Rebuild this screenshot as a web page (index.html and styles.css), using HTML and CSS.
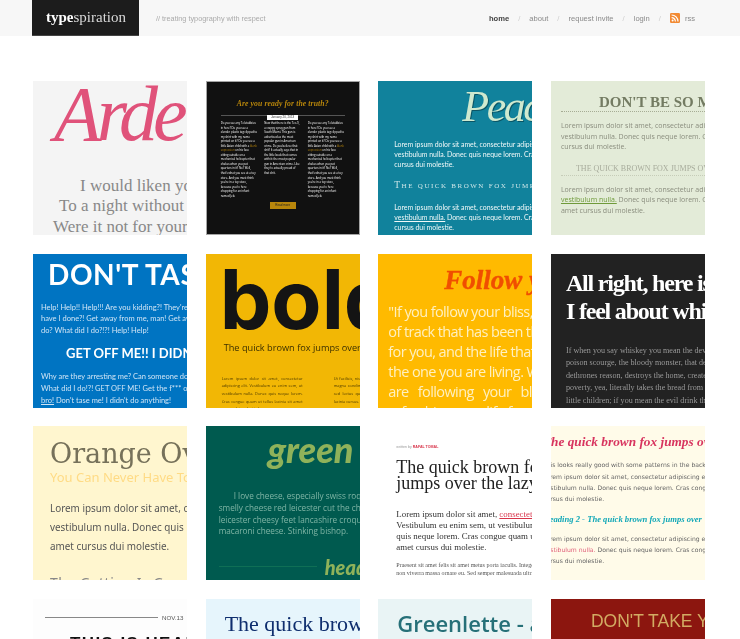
FILE: index.html
```html
<!DOCTYPE html>
<html lang="en">
<head>
  <meta charset="UTF-8" />
  <meta name="viewport" content="width=device-width, initial-scale=1.0"/>
  <title>typespiration</title>
  <link rel="stylesheet" href="styles.css">
</head>
<body>
  <header class="topbar">
    <a class="logo" href="#"><b>type</b>spiration</a>
    <p class="tagline">// treating typography with respect</p>
    <nav class="nav">
      <a class="active" href="#">home</a><i>/</i>
      <a href="#">about</a><i>/</i>
      <a href="#">request invite</a><i>/</i>
      <a href="#">login</a><i>/</i>
      <svg class="rss" viewBox="0 0 10 10" width="10" height="10">
        <rect width="10" height="10" rx="1.2" fill="#f28a33"/>
        <circle cx="2.6" cy="7.5" r="1" fill="#fff"/>
        <path d="M1.6 4.6a3.8 3.8 0 0 1 3.8 3.8M1.6 2a6.4 6.4 0 0 1 6.4 6.4" fill="none" stroke="#fff" stroke-width="1.2"/>
      </svg>
      <a class="rss-label" href="#">rss</a>
    </nav>
  </header>

  <main class="grid">
    <article class="card c1">
      <h2>Ardel</h2>
      <p><span class="l1">I would liken you</span><span class="l2">To a night without</span><span class="l3">Were it not for your</span></p>
    </article>

    <article class="card c2">
      <h2>Are you ready for the truth?</h2>
      <div class="date"><span>January 20, 2013</span></div>
      <div class="cols">
        <p>Do you see any Teletubbies in here? Do you see a slender plastic tag clipped to my shirt with my name printed on it? Do you see a little Asian child with a <em>blank expression</em> on his face sitting outside on a mechanical helicopter that shakes when you put quarters in it? No? Well, that's what you see at a toy store. And you must think you're in a toy store, because you're here shopping for an infant named Jeb.</p>
        <p>Now that there is the Tec-9, a crappy spray gun from South Miami. This gun is advertised as the most popular gun in American crime. Do you believe that shit? It actually says that in the little book that comes with it: the most popular gun in American crime. Like they're actually proud of that shit.</p>
        <p>Do you see any Teletubbies in here? Do you see a slender plastic tag clipped to my shirt with my name printed on it? Do you see a little Asian child with a <em>blank expression</em> on his face sitting outside on a mechanical helicopter that shakes when you put quarters in it? No? Well, that's what you see at a toy store. And you must think you're in a toy store, because you're here shopping for an infant named Jeb.</p>
      </div>
      <span class="more">Read more</span>
    </article>

    <article class="card c3">
      <h2>Peace</h2>
      <p>Lorem ipsum dolor sit amet, consectetur adipiscing<br>vestibulum nulla. Donec quis neque lorem. Cras congue<br>cursus dui molestie.</p>
      <h3>The quick brown fox jumps over</h3>
      <p>Lorem ipsum dolor sit amet, consectetur adipiscing<br><u>vestibulum nulla.</u> Donec quis neque lorem. Cras congue<br>cursus dui molestie.</p>
    </article>

    <article class="card c4">
      <h2>DON'T BE SO MEAN</h2>
      <p>Lorem ipsum dolor sit amet, consectetur adipiscing elit.<br>vestibulum nulla. Donec quis neque lorem. Cras congue<br>cursus dui molestie.</p>
      <h3>THE QUICK BROWN FOX JUMPS OVER</h3>
      <p><span>Lorem ipsum dolor sit amet, consectetur adipiscing elit.</span><br><u>vestibulum nulla.</u> Donec quis neque lorem. Cras congue<br>amet cursus dui molestie.</p>
    </article>

    <article class="card c5">
      <h2>DON'T TASE ME</h2>
      <p>Help! Help!! Help!!! Are you kidding?! They're tasing me!<br>have I done?! Get away from me, man! Get away! What did I<br>do? What did I do?!?! Help! Help!</p>
      <h3>GET OFF ME!! I DIDN'T DO IT</h3>
      <p>Why are they arresting me? Can someone do something?<br>What did I do!?! GET OFF ME! Get the f*** of me!<br><u>bro!</u> Don't tase me! I didn't do anything!</p>
    </article>

    <article class="card c6">
      <h2>bold</h2>
      <h3>The quick brown fox jumps over the lazy dog</h3>
      <div class="cols">
        <p>Lorem ipsum dolor sit amet, consectetur adipiscing elit. Vestibulum eu enim sem, ut vestibulum nulla. Donec quis neque lorem. Cras congue quam ut tellus lacinia sit amet cursus dui molestie lorem.</p>
        <p>Ut facilisis, nisl sit amet libero justo tempor magna condimentum lorem ipsum. Aenean sed lectus quam ut dolor sit amet tellus lacinia cursus.</p>
      </div>
    </article>

    <article class="card c7">
      <h2>Follow your</h2>
      <p>"If you follow your bliss, you<br>of track that has been there<br>for you, and the life that you<br>the one you are living. When<br><span class="wide">are following your bliss</span><br>refreshing your life from</p>
    </article>

    <article class="card c8">
      <h2>All right, here is how<br>I feel about whiskey</h2>
      <p>If when you say whiskey you mean the devil's brew, the<br>poison scourge, the bloody monster, that defiles innocence,<br>dethrones reason, destroys the home, creates misery and<br>poverty, yea, literally takes the bread from the mouths of<br>little children; if you mean the evil drink that topples</p>
    </article>

    <article class="card c9">
      <h2>Orange Over</h2>
      <h3>You Can Never Have Too Much</h3>
      <p>Lorem ipsum dolor sit amet, consectetur<br>vestibulum nulla. Donec quis neque<br>amet cursus dui molestie.</p>
      <h4>The Getting Is Good</h4>
    </article>

    <article class="card c10">
      <h2>green</h2>
      <p><span class="indent">I love cheese, especially swiss roquefort</span><br>smelly cheese red leicester cut the cheese<br>leicester cheesy feet lancashire croque<br>macaroni cheese. Stinking bishop.</p>
      <div class="foot"><span class="rule"></span><h3>heading</h3></div>
    </article>

    <article class="card c11">
      <small>written by <b>RAFAL TOMAL</b></small>
      <h2>The quick brown fox<br>jumps over the lazy dog</h2>
      <p>Lorem ipsum dolor sit amet, <u>consectetur adipiscing</u><br>Vestibulum eu enim sem, ut vestibulum nulla. Donec<br>quis neque lorem. Cras congue quam ut tellus<br>amet cursus dui molestie.</p>
      <p class="fine">Praesent sit amet felis sit amet metus porta iaculis. Integer<br>non viverra massa ornare eu. Sed semper malesuada ultrices<br>Dignissim lacinia ornare.</p>
    </article>

    <article class="card c12">
      <h2>The quick brown fox jumps over</h2>
      <p>This looks really good with some patterns in the background<br>Lorem ipsum dolor sit amet, consectetur adipiscing elit<br>vestibulum nulla. Donec quis neque lorem. Cras congue<br>cursus dui molestie.</p>
      <h3>Heading 2 - The quick brown fox jumps over</h3>
      <p>Lorem ipsum dolor sit amet, consectetur adipiscing elit<br><span class="link">vestibulum nulla.</span> Donec quis neque lorem. Cras congue<br>cursus dui molestie.</p>
    </article>

    <article class="card c13">
      <div class="dateline"><span class="rule"></span><span>NOV.13</span></div>
      <h2>THIS IS HEADING</h2>
    </article>

    <article class="card c14"><h2>The quick brown fox</h2></article>
    <article class="card c15"><h2>Greenlette - a font</h2></article>
    <article class="card c16"><h2>DON'T TAKE YOURSELF</h2></article>
  </main>
</body>
</html>
```

FILE: styles.css
```css
html, body {
  margin: 0;
  height: 639px;
  overflow: hidden;
}
body {
  font-family: "Liberation Sans", Arial, sans-serif;
  background: #fff;
  color: #222;
}
h2, h3, h4, p {
  margin: 0;
  font-weight: normal;
}

/* header */
.topbar {
  display: flex;
  align-items: center;
  height: 36px;
  padding-left: 32px;
  background: #f7f7f7;
  filter: blur(0.3px);
}
.logo {
  display: block;
  box-sizing: border-box;
  width: 107px;
  height: 36px;
  padding-left: 14px;
  background: #1c1c1c;
  border-bottom: 1px solid #444;
  color: #d8d8d8;
  font: 15px/34px "Liberation Serif", serif;
  text-decoration: none;
}
.logo b {
  color: #fff;
}
.tagline {
  margin-left: 17px;
  font-size: 7.3px;
  color: #aaa;
}
.nav {
  display: flex;
  align-items: center;
  margin-left: auto;
  margin-right: 45px;
  font-size: 7.6px;
}
.nav a {
  color: #8a8a8a;
  text-decoration: none;
}
.nav a.active {
  color: #444;
  font-weight: bold;
}
.nav i {
  margin: 0 9px;
  color: #ccc;
  font-style: normal;
}
.rss {
  margin-right: 5px;
}

/* card grid */
.grid {
  display: grid;
  grid-template-columns: repeat(4, 154px);
  grid-auto-rows: 154px;
  gap: 18.67px;
  width: 672px;
  margin: 45px 0 0 33px;
  filter: blur(0.3px);
}
.card {
  overflow: hidden;
  white-space: nowrap;
  box-sizing: border-box;
}

.c1 {
  background: #f4f4f4;
  color: #888;
  font-family: "Liberation Serif", serif;
  padding-left: 21px;
}
.c1 h2 {
  font-size: 78px;
  line-height: 84px;
  font-style: italic;
  letter-spacing: -5px;
  color: #e0527a;
  margin-top: -9px;
}
.c1 p {
  margin-top: 20px;
  font-size: 17px;
  line-height: 20.3px;
}
.c1 p span {
  display: block;
}
.c1 .l1 {
  margin-left: 26px;
}
.c1 .l2 {
  margin-left: 5px;
}
.c1 .l3 {
  margin-left: -1px;
}

.c2 {
  background: #111;
  border: 1px solid #a5a5a5;
  padding: 0 14px;
  color: #fff;
}
.c2 h2 {
  margin-top: 17px;
  font: italic bold 7.7px/10px "Liberation Serif", serif;
  letter-spacing: 0.1px;
  color: #b8860b;
  text-align: center;
}
.c2 .date {
  margin-top: 6px;
  height: 1px;
  background: #555;
  text-align: center;
  font-size: 3px;
  line-height: 1px;
}
.c2 .date span {
  display: inline-block;
  padding: 0 4px;
  background: #fff;
  color: #333;
  line-height: 5px;
  vertical-align: middle;
}
.c2 .cols {
  display: grid;
  grid-template-columns: repeat(3, 37px);
  gap: 6.5px;
  margin-top: 5px;
  white-space: normal;
  height: 81px;
}
.c2 .cols p {
  font: 2.75px/4.55px "Open Sans", sans-serif;
}
.c2 em {
  font-style: normal;
  color: #b8860b;
}
.c2 .more {
  display: block;
  width: 26px;
  margin: 0 auto;
  background: #b8860b;
  color: #222;
  font-size: 3px;
  line-height: 7px;
  text-align: center;
}

.c3 {
  background: #11829c;
  color: #f0f8f8;
  padding-left: 16px;
  font-family: Lato, sans-serif;
}
.c3 h2 {
  margin: 0 0 0 68px;
  height: 58px;
  font: italic 44px/52px "Liberation Serif", serif;
  letter-spacing: -2.5px;
  color: #cfe9cf;
  text-shadow: 1px 1px 0 #0a5566;
}
.c3 p {
  font-size: 6.9px;
  line-height: 10px;
}
.c3 h3 {
  margin: 10px 0 10px;
  font: 9.5px/13px "Liberation Serif", serif;
  font-variant: small-caps;
  letter-spacing: 1.5px;
  color: #cde6e8;
}

.c4 {
  background: #e3ebd8;
  color: #8a8d7e;
  font-family: "Open Sans", sans-serif;
  padding-left: 10px;
}
.c4 h2 {
  margin-top: 13px;
  padding-left: 38px;
  padding-bottom: 0;
  border-bottom: 1px dotted #a6ac94;
  font: bold 15px/17px "Liberation Serif", serif;
  color: #737b62;
}
.c4 p {
  margin-top: 9px;
  font-size: 7px;
  line-height: 10.5px;
}
.c4 h3 {
  margin-top: 10px;
  padding: 0 0 1px 15px;
  border-bottom: 1px dotted #c6ccb8;
  font: 8px/11px "Liberation Serif", serif;
  color: #a8ac9c;
}
.c4 u {
  color: #6f9a3a;
}

.c5 {
  background: #0074c2;
  color: #cfe4f5;
  font-family: Lato, sans-serif;
  padding-left: 8px;
}
.c5 h2 {
  margin: 5px 0 0 7px;
  font: bold 28px/31px Lato, sans-serif;
  letter-spacing: 0.6px;
  color: #fff;
}
.c5 p {
  margin-top: 12px;
  font-size: 7.5px;
  line-height: 11.6px;
}
.c5 h3 {
  margin: 8px 0 -3px 25px;
  font: bold 13px/18px Lato, sans-serif;
  color: #fff;
}

.c6 {
  background: #f2b705;
  color: #4a3800;
  padding-left: 14px;
  font-family: "Open Sans", sans-serif;
}
.c6 h2 {
  margin-top: -4px;
  font: bold 82px/100px Inter, sans-serif;
  color: #141414;
}
.c6 h3 {
  margin: -9px 0 0 4px;
  font-size: 9.2px;
  line-height: 14px;
  color: #3c3000;
}
.c6 .cols {
  display: grid;
  grid-template-columns: 81px 81px;
  gap: 31px;
  margin: 20px 0 0 2px;
  white-space: normal;
}
.c6 .cols p {
  font-size: 3.9px;
  line-height: 7.7px;
  text-align: justify;
}

.c7 {
  background: #ffba00;
  color: #fff0c0;
  padding-left: 10px;
  font-family: "Open Sans", sans-serif;
}
.c7 h2 {
  margin: 9px 0 0 56px;
  font: italic bold 27px/35px "Liberation Serif", serif;
  -webkit-text-stroke: 0.4px #f04e00;
  color: #f04e00;
}
.c7 p {
  margin-top: 4px;
  font-size: 14.5px;
  line-height: 20px;
  letter-spacing: -0.6px;
}
.c7 .wide {
  word-spacing: 6px;
}

.c8 {
  background: #222;
  color: #999;
  padding-left: 15px;
  font-family: "Liberation Serif", serif;
}
.c8 h2 {
  margin-top: 15px;
  font-size: 24px;
  line-height: 28.5px;
  font-weight: bold;
  letter-spacing: -1.2px;
  color: #fff;
}
.c8 p {
  margin-top: 19px;
  font-size: 8.1px;
  line-height: 12.5px;
}

.c9 {
  background: #fff6cf;
  color: #555;
  padding-left: 17px;
  font-family: "Noto Sans", sans-serif;
}
.c9 h2 {
  margin-top: 13px;
  font: 27px/30px "DejaVu Serif", serif;
  color: #76715a;
}
.c9 h3 {
  font-size: 13px;
  line-height: 17px;
  color: #ffdb85;
}
.c9 p {
  margin-top: 13px;
  font-size: 9.9px;
  line-height: 19px;
}
.c9 h4 {
  margin-top: 17px;
  font-size: 14px;
  font-weight: normal;
  letter-spacing: 0.5px;
  color: #888;
}

.c10 {
  background: #005a4f;
  color: #7fb5a5;
  padding-left: 13px;
  font-family: "Open Sans", sans-serif;
}
.c10 h2 {
  margin: 5px 0 0 49px;
  font: italic 900 36px/36px Lato, sans-serif;
  color: #8fb25a;
}
.c10 p {
  margin-top: 23px;
  font-size: 8.2px;
  line-height: 11.6px;
}
.c10 .indent {
  margin-left: 15px;
}
.c10 .foot {
  display: flex;
  align-items: center;
  gap: 8px;
  margin-top: 20px;
}
.c10 .rule {
  width: 98px;
  height: 1px;
  background: #0f6f55;
  flex: none;
}
.c10 h3 {
  font: italic 900 20px/20px Lato, sans-serif;
  color: #8fb25a;
}

.c11 {
  background: #fff;
  color: #333;
  padding-left: 18px;
  font-family: "Liberation Serif", serif;
}
.c11 small {
  display: block;
  margin-top: 19px;
  font: 3.6px/5px "Liberation Sans", sans-serif;
  color: #999;
}
.c11 small b {
  color: #d8344a;
}
.c11 h2 {
  margin-top: 9px;
  font: 18px/16px "Liberation Serif", serif;
  color: #222;
}
.c11 p {
  margin-top: 18px;
  font-size: 8.9px;
  line-height: 10.9px;
}
.c11 u {
  color: #d8344a;
}
.c11 .fine {
  margin-top: 8px;
  font-size: 6px;
  line-height: 8.4px;
  color: #555;
}

.c12 {
  background: #fffbe9;
  color: #666;
  font-family: "DejaVu Sans", sans-serif;
}
.c12 h2 {
  margin: 7px 0 0 -8px;
  font: italic bold 13.3px/17px "Liberation Serif", serif;
  color: #d8345f;
}
.c12 p {
  margin: 9px 0 0 -8px;
  font-size: 6.1px;
  line-height: 11.3px;
}
.c12 h3 {
  margin: 7px 0 0 -8px;
  font: italic bold 8.6px/14px "Liberation Serif", serif;
  color: #12a8b8;
}
.c12 h3 + p {
  margin-top: 7px;
}
.c12 .link {
  color: #e0607a;
}

.c13 {
  background: #fdfdfd;
  padding-left: 12px;
}
.c13 .dateline {
  display: flex;
  align-items: center;
  gap: 4px;
  margin-top: 15px;
  font-size: 6.2px;
  line-height: 8px;
  color: #555;
}
.c13 .rule {
  width: 113px;
  height: 1px;
  background: #888;
}
.c13 h2 {
  margin: 12px 0 0 25px;
  font-size: 17px;
  font-weight: bold;
  letter-spacing: 1.4px;
  color: #111;
}

.c14 {
  background: #e6f5fc;
  padding-left: 19px;
}
.c14 h2 {
  margin-top: 11px;
  font: 22px/28px "Liberation Serif", serif;
  color: #0f2e6e;
}

.c15 {
  background: #e9f4f5;
  padding-left: 19px;
}
.c15 h2 {
  margin-top: 9px;
  font: 600 22px/30px "Open Sans", sans-serif;
  color: #267078;
}

.c16 {
  background: #8c160f;
  padding-left: 40px;
}
.c16 h2 {
  margin-top: 10px;
  font-size: 17.5px;
  line-height: 24px;
  color: #d2ab63;
}
```
